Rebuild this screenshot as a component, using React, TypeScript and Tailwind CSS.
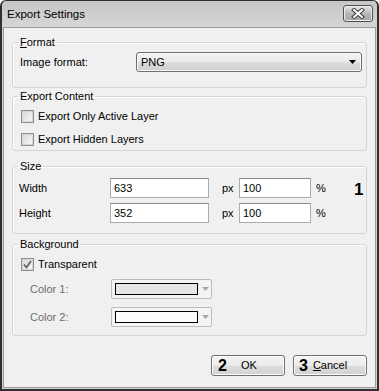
import React from "react";

function Checkbox({ checked = false }: { checked?: boolean }) {
  return (
    <span className="flex h-[13px] w-[13px] shrink-0 items-center justify-center border border-[#8f8f8f] bg-[#f4f4f4]">
      <span className="flex h-[11px] w-[11px] items-center justify-center border border-[#d6d6d6] bg-[linear-gradient(135deg,#d8d8d8,#f7f7f7)]">
        {checked && (
          <svg width="9" height="9" viewBox="0 0 9 9">
            <path d="M1 4.5 L3.5 7.5 L8 1" fill="none" stroke="#5a5a5a" strokeWidth="1.6" />
          </svg>
        )}
      </span>
    </span>
  );
}

function TextBox({ value, w }: { value: string; w: string }) {
  return (
    <div className={`${w} flex h-[20px] items-center border border-[#acacac] border-t-[#8c8c8c] bg-white pl-[3px] text-black`}>
      {value}
    </div>
  );
}

function ColorCombo({ swatch }: { swatch: string }) {
  return (
    <div className="flex h-[20px] w-[101px] items-center rounded-[2px] border border-[#bcbcbc] bg-[#f4f4f4] pl-[3px]">
      <div className={`h-[12px] w-[83px] border border-black ${swatch}`} />
      <svg className="ml-[4px]" width="7" height="4" viewBox="0 0 7 4">
        <path d="M0 0 H7 L3.5 4 Z" fill="#a8a8a8" />
      </svg>
    </div>
  );
}

function Group({ title, className, children }: { title: React.ReactNode; className: string; children?: React.ReactNode }) {
  return (
    <fieldset className={`relative rounded-[3px] border border-[#d5d5d5] shadow-[inset_1px_1px_0_#ffffff] ${className}`}>
      <legend className="ml-[5px] px-[2px] leading-[14px] text-black">{title}</legend>
      {children}
    </fieldset>
  );
}

function Button({ children }: { children: React.ReactNode }) {
  return (
    <div className="flex h-[21px] w-[74px] items-center rounded-[3px] border border-[#707070] bg-[linear-gradient(180deg,#f4f4f4_0%,#ebebeb_50%,#dddddd_51%,#d2d2d2_100%)] shadow-[inset_0_0_0_1px_#fcfcfc]">
      {children}
    </div>
  );
}

export default function App() {
  return (
    <div className="flex h-[391px] w-[379px] flex-col rounded-t-[6px] border-x-2 border-b-2 border-t border-[#2f2f2f] bg-[#d2d2d2] font-['Liberation_Sans',Arial,sans-serif] text-[11px] text-black">
      <div className="flex h-[26px] shrink-0 items-start rounded-t-[5px] bg-[linear-gradient(180deg,#c6c6c6,#d6d6d6)] pl-[5px]">
        <span className="mt-[6px] text-[11.5px] leading-[14px]">Export Settings</span>
        <div className="ml-auto mr-[4px] mt-[4px] flex h-[17px] w-[30px] items-center justify-center rounded-[3px] border border-[#505050] bg-[linear-gradient(180deg,#e6e6e6,#b4b4b4_55%,#a6a6a6)] shadow-[inset_0_0_0_1px_#ececec]">
          <svg width="14" height="11" viewBox="0 0 14 11">
            <path d="M3 2 L11 9 M11 2 L3 9" stroke="#3c3c3c" strokeWidth="4" strokeLinecap="square" />
            <path d="M3 2 L11 9 M11 2 L3 9" stroke="#ffffff" strokeWidth="2" strokeLinecap="square" />
          </svg>
        </div>
      </div>

      <div className="mx-px mb-px flex flex-1 flex-col border border-[#9a9a9a] bg-[#f0f0f0] px-[8px] pt-[7px]">
        <Group
          className="h-[53px]"
          title={
            <span>
              <span className="underline">F</span>ormat
            </span>
          }
        >
          <div className="mt-[3px] flex h-[20px] items-center pl-[7px]">
            <span className="w-[116px]">Image format:</span>
            <div className="flex h-[20px] w-[226px] items-center rounded-[3px] border border-[#707070] bg-[linear-gradient(180deg,#f2f2f2_0%,#ebebeb_50%,#dddddd_51%,#cfcfcf_100%)] pl-[4px] pr-[5px] shadow-[inset_0_0_0_1px_#fafafa]">
              <span>PNG</span>
              <svg className="ml-auto" width="7" height="4" viewBox="0 0 7 4">
                <path d="M0 0 H7 L3.5 4 Z" fill="#000" />
              </svg>
            </div>
          </div>
        </Group>

        <Group className="mt-[1px] h-[62px]" title="Export Content">
          <div className="mt-[7px] flex flex-col gap-[10px] pl-[8px]">
            <div className="flex h-[13px] items-center gap-[4px]">
              <Checkbox />
              <span>Export Only Active Layer</span>
            </div>
            <div className="flex h-[13px] items-center gap-[4px]">
              <Checkbox />
              <span>Export Hidden Layers</span>
            </div>
          </div>
        </Group>

        <Group className="mt-[8px] h-[75px]" title="Size">
          <div className="mt-[5px] flex flex-col gap-[5px] pl-[6px]">
            <div className="flex h-[20px] items-center">
              <span className="w-[91px]">Width</span>
              <TextBox value="633" w="w-[99px]" />
              <span className="w-[30px] pl-[13px]">px</span>
              <TextBox value="100" w="w-[72px]" />
              <span className="ml-[5px]">%</span>
            </div>
            <div className="flex h-[20px] items-center">
              <span className="w-[91px]">Height</span>
              <TextBox value="352" w="w-[99px]" />
              <span className="w-[30px] pl-[13px]">px</span>
              <TextBox value="100" w="w-[72px]" />
              <span className="ml-[5px]">%</span>
            </div>
          </div>
          <span className="absolute left-[341px] top-[8px] text-[17px] font-bold leading-[18px]">1</span>
        </Group>

        <Group className="mt-[3px] h-[99px]" title="Background">
          <div className="mt-[7px] flex h-[13px] items-center gap-[4px] pl-[8px]">
            <Checkbox checked />
            <span>Transparent</span>
          </div>
          <div className="mt-[8px] flex flex-col gap-[8px] pl-[17px]">
            <div className="flex h-[20px] items-center">
              <span className="w-[81px] text-[#6d6d6d]">Color 1:</span>
              <ColorCombo swatch="bg-[#e6e6e6]" />
            </div>
            <div className="flex h-[20px] items-center">
              <span className="w-[81px] text-[#6d6d6d]">Color 2:</span>
              <ColorCombo swatch="bg-[#fbfbfb]" />
            </div>
          </div>
        </Group>

        <div className="mt-[19px] flex justify-end gap-[8px]">
          <Button>
            <span className="ml-[6px] text-[16px] font-bold leading-[16px]">2</span>
            <span className="ml-[14px]">OK</span>
          </Button>
          <Button>
            <span className="ml-[5px] text-[16px] font-bold leading-[16px]">3</span>
            <span className="ml-[5px]">
              <span className="underline">C</span>ancel
            </span>
          </Button>
        </div>
      </div>
    </div>
  );
}
